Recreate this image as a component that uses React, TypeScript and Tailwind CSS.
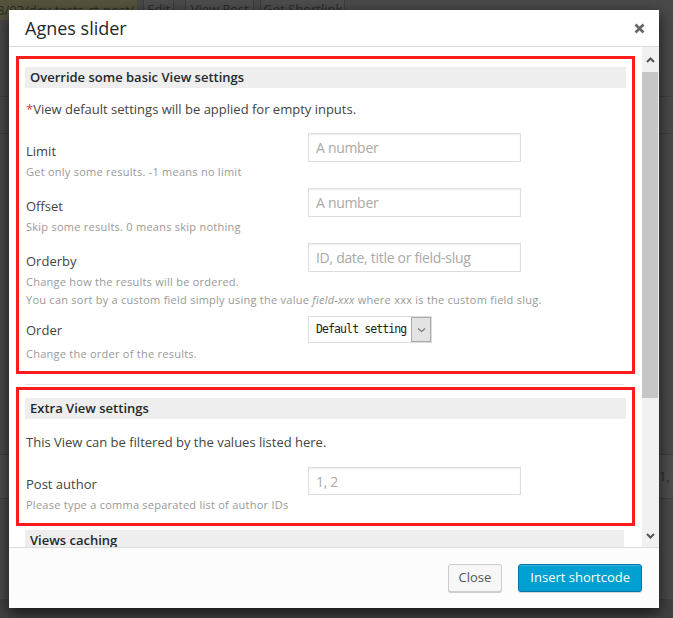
import type { ReactNode } from "react";

const inputClass =
  "w-[213px] border border-[#ddd] bg-white px-[7px] text-[14px] tracking-[-0.3px] text-[#32373c] placeholder:text-[#a9a9a9] shadow-[inset_0_1px_2px_rgba(0,0,0,0.07)] outline-none";

function Backdrop() {
  return (
    <div className="flex flex-col text-[#2b2b2b]">
      {/* post toolbar behind the overlay */}
      <div className="-mt-[2px] flex h-[24px] items-center text-[13px]">
        <span className="-ml-[3px] bg-[#57543d] pr-[3px] leading-[20px]">
          8/03/dev-tests-ct-post/
        </span>
        <span className="ml-[6px] flex h-[24px] w-[31px] items-center justify-center border border-[#3d3d3d] bg-[#4e4e4e]">
          Edit
        </span>
        <span className="ml-[11px] flex h-[24px] w-[69px] items-center justify-center border border-[#3d3d3d] bg-[#4e4e4e]">
          View Post
        </span>
        <span className="ml-[6px] flex h-[24px] w-[85px] items-center justify-center border border-[#3d3d3d] bg-[#4e4e4e]">
          Get Shortlink
        </span>
      </div>
      <div className="h-[75px] border-b border-[#3f3f3f]" />
      <div className="h-[37px] border-b border-[#3f3f3f]" />
      <div className="h-[321px] border-b border-[#3f3f3f]" />
      <div className="flex h-[44px] items-center border-b border-[#3f3f3f] bg-[#4f4f4f] text-[13px]">
        <span className="ml-[659px] whitespace-nowrap">1, 2</span>
      </div>
      <div className="h-[101px] border-b border-[#3f3f3f]" />
      <div className="h-[40px] bg-[#424242]" />
    </div>
  );
}

function Field({
  label,
  control,
  notes,
  center,
  last,
}: {
  label: string;
  control: ReactNode;
  notes: ReactNode[];
  center?: boolean;
  last?: boolean;
}) {
  return (
    <div className={`${last ? "" : "mb-[7px]"} pl-px`}>
      <div className={`flex ${center ? "items-center" : "items-end"}`}>
        <label className={`w-[282px] text-[13px] leading-[18px] text-[#444] ${center ? "" : "mb-[2px]"}`}>
          {label}
        </label>
        {control}
      </div>
      {notes.map((n, i) => (
        <p
          key={i}
          className={`${i === 0 ? (center ? "mt-[2px]" : "mt-px") : ""} text-[11px] leading-[18px] tracking-[0.25px] text-[#999]`}
        >
          {n}
        </p>
      ))}
    </div>
  );
}

function SectionHead({ children }: { children: ReactNode }) {
  return (
    <h3 className="bg-[#eee] px-[5px] text-[13px] font-semibold leading-[21px] text-[#23282d]">
      {children}
    </h3>
  );
}

function Chevron({ up }: { up?: boolean }) {
  return (
    <svg width="9" height="6" viewBox="0 0 9 6" className={up ? "" : "rotate-180"}>
      <path d="M1 5 L4.5 1.5 L8 5" fill="none" stroke="#555" strokeWidth="2" />
    </svg>
  );
}

function Modal() {
  return (
    <div className="absolute left-[9px] top-[10px] flex h-[598px] w-[650px] flex-col bg-white shadow-[0_5px_15px_rgba(0,0,0,0.7)]">
      {/* header */}
      <div className="flex h-[37px] shrink-0 items-center justify-between border-b border-[#ddd] pl-[16px] pr-[14px]">
        <h1 className="text-[18px] leading-[36px] text-[#23282d]">Agnes slider</h1>
        <svg width="11" height="11" viewBox="0 0 11 11">
          <path d="M1.5 1.5 L9.5 9.5 M9.5 1.5 L1.5 9.5" stroke="#666" strokeWidth="2.6" />
        </svg>
      </div>

      {/* body */}
      <div className="flex min-h-0 flex-1">
        <div className="flex-1 overflow-hidden pl-[16px] pr-[18px] pt-[9px]">
          <div className="-ml-[9px] -mr-[11px] border-[3px] border-[#fd1c1c] px-[6px] pb-[8px] pt-[8px]">
            <SectionHead>Override some basic View settings</SectionHead>
            <p className="mb-[14px] mt-[11px] pl-px text-[13px] leading-[20px] text-[#444]">
              <span className="text-[#dd3333]">*</span>View default settings will be applied for empty inputs.
            </p>
            <Field
              label="Limit"
              control={<input className={`${inputClass} h-[29px]`} placeholder="A number" />}
              notes={["Get only some results. -1 means no limit"]}
            />
            <Field
              label="Offset"
              control={<input className={`${inputClass} h-[29px]`} placeholder="A number" />}
              notes={["Skip some results. 0 means skip nothing"]}
            />
            <Field
              label="Orderby"
              control={<input className={`${inputClass} h-[29px]`} placeholder="ID, date, title or field-slug" />}
              notes={[
                "Change how the results will be ordered.",
                <>
                  You can sort by a custom field simply using the value <em>field-xxx</em> where xxx is the
                  custom field slug.
                </>,
              ]}
            />
            <Field
              label="Order"
              center
              last
              control={
                <div className="flex h-[27px] w-[124px] items-stretch border border-[#ddd] bg-white">
                  <span className="flex flex-1 items-center whitespace-nowrap pl-[7px] font-['DejaVu_Sans_Mono',monospace] text-[11.5px] tracking-[-0.9px] text-[#222]">
                    Default setting
                  </span>
                  <span className="flex w-[20px] shrink-0 items-center justify-center border border-[#aaa] bg-[#e3e3e3]">
                    <svg width="9" height="6" viewBox="0 0 9 6">
                      <path d="M1 1.5 L4.5 4.5 L8 1.5" fill="none" stroke="#777" strokeWidth="1.2" />
                    </svg>
                  </span>
                </div>
              }
              notes={["Change the order of the results."]}
            />
          </div>

          <div className="mt-[10px] h-px bg-[#e3e3e3]" />

          <div className="-ml-[9px] -mr-[11px] mt-[2px] border-[3px] border-[#fd1c1c] px-[6px] pb-[9px] pt-[8px]">
            <SectionHead>Extra View settings</SectionHead>
            <p className="mb-[15px] mt-[13px] pl-px text-[13px] leading-[20px] text-[#444]">
              This View can be filtered by the values listed here.
            </p>
            <Field
              label="Post author"
              last
              control={<input className={`${inputClass} h-[28px]`} placeholder="1, 2" />}
              notes={["Please type a comma separated list of author IDs"]}
            />
          </div>

          <div className="mt-[4px]">
            <SectionHead>Views caching</SectionHead>
          </div>
        </div>

        {/* scrollbar */}
        <div className="flex w-[17px] shrink-0 flex-col bg-[#f1f1f1]">
          <div className="flex h-[25px] items-center justify-center">
            <Chevron up />
          </div>
          <div className="h-[326px] w-[16px] bg-[#c6c6c6]" />
          <div className="flex-1" />
          <div className="flex h-[22px] items-center justify-center">
            <Chevron />
          </div>
        </div>
      </div>

      {/* footer */}
      <div className="flex h-[61px] shrink-0 items-start justify-end gap-[16px] border-t border-[#ddd] bg-[#fcfcfc] pr-[17px] pt-[16px]">
        <button className="h-[28px] rounded-[3px] border border-[#ccc] bg-[#f7f7f7] px-[10px] text-[13px] text-[#555] shadow-[0_1px_0_#ccc]">
          Close
        </button>
        <button className="h-[28px] rounded-[3px] border border-[#0073aa] bg-[#00a0d2] px-[11px] text-[13px] text-white shadow-[inset_0_1px_0_rgba(120,200,230,0.5),0_1px_0_rgba(0,0,0,0.15)]">
          Insert shortcode
        </button>
      </div>
    </div>
  );
}

export default function App() {
  return (
    <div className="relative h-[618px] w-[673px] overflow-hidden bg-[#4a4a4a] font-['Open_Sans',sans-serif]">
      <Backdrop />
      <Modal />
    </div>
  );
}
